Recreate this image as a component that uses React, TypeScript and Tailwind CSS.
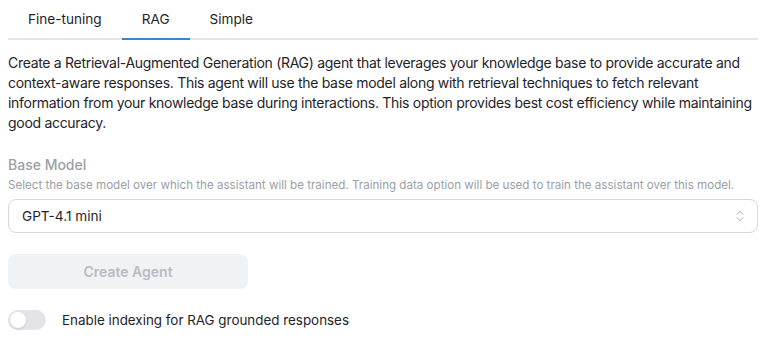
import { ChevronsUpDown } from "lucide-react";

const tabs = ["Fine-tuning", "RAG", "Simple"];

export default function App() {
  return (
    <div className="bg-white w-[783px] h-[351px] px-2 text-[#1f2328]" style={{ fontFamily: "Inter, 'Noto Sans', sans-serif" }}>
      <div className="flex border-b-2 border-[#e3e5e8] w-[750px] h-[40px]">
        {tabs.map((t) => (
          <div
            key={t}
            className={`px-5 flex items-center text-[13.6px] -mb-[2px] border-b-2 ${
              t === "RAG" ? "border-[#3b82dc]" : "border-transparent"
            }`}
          >
            {t}
          </div>
        ))}
      </div>

      <p className="mt-[13px] w-[760px] text-[14px] leading-5 tracking-[-0.3px]">
        Create a Retrieval-Augmented Generation (RAG) agent that leverages your knowledge base to provide accurate and
        context-aware responses. This agent will use the base model along with retrieval techniques to fetch relevant
        information from your knowledge base during interactions. This option provides best cost efficiency while
        maintaining good accuracy.
      </p>

      <div className="mt-[22px] text-[14px] leading-5 font-medium text-[#9aa0a6]">Base Model</div>
      <div className="mt-[2px] text-[11.6px] leading-4 text-[#9aa0a6]">
        Select the base model over which the assistant will be trained. Training data option will be used to train the
        assistant over this model.
      </div>

      <div className="mt-[6px] w-[750px] h-[34px] border border-[#d5d8dd] rounded-lg flex items-center justify-between pl-[13px] pr-[10px]">
        <span className="text-[13.6px]">GPT-4.1 mini</span>
        <ChevronsUpDown className="w-[14px] h-[14px] text-[#9aa0a6]" strokeWidth={1.5} />
      </div>

      <button className="mt-[21px] w-[240px] h-[35px] rounded-lg bg-[#f1f2f4] text-[14px] font-semibold text-[#b7bcc3] block">
        Create Agent
      </button>

      <div className="mt-[21px] flex items-center gap-[16px]">
        <div className="w-[38px] h-[20px] rounded-full bg-[#e2e4e8] p-[2px] flex">
          <div className="w-[16px] h-[16px] rounded-full bg-white shadow-sm" />
        </div>
        <span className="text-[13.4px]">Enable indexing for RAG grounded responses</span>
      </div>
    </div>
  );
}
